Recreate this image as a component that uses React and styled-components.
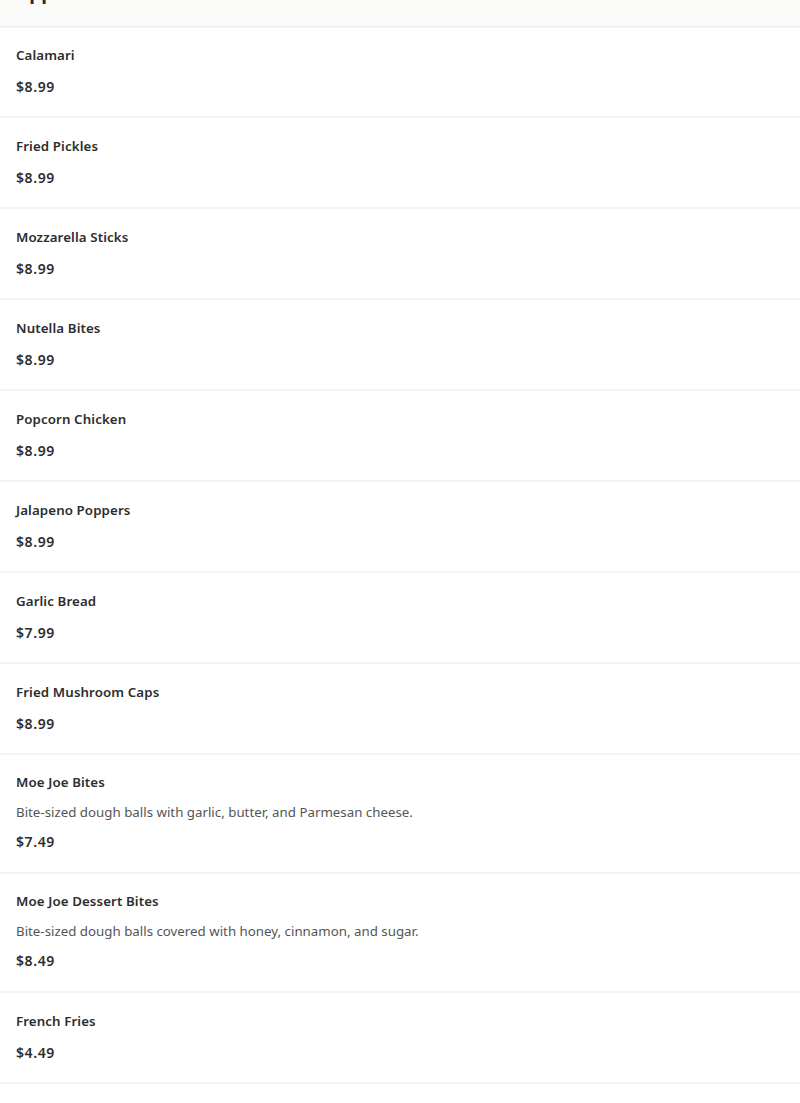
import React from 'react';
import styled, { createGlobalStyle } from 'styled-components';

const GlobalStyle = createGlobalStyle`
  body {
    margin: 0;
    background: #fff;
    font-family: "Noto Sans", "Open Sans", sans-serif;
    color: #2d2d2d;
  }
`;

const Menu = styled.section`
  display: flex;
  flex-direction: column;
  overflow: hidden;
`;

const Header = styled.header`
  margin-top: -22px;
  padding: 0 16px 20px;
  background: #fafaf9;
  border-bottom: 1px solid #ececec;
  box-shadow: 0 1px 0 #f7f7f7;
`;

const HeaderTitle = styled.h2`
  margin: 0;
  font-size: 19px;
  line-height: 28px;
  font-weight: 700;
  color: #2a2a2a;
`;

const Item = styled.div`
  display: flex;
  flex-direction: column;
  padding: ${(p) => (p.$hasDesc ? '17px 16px 20px' : '18px 16px 19px')};
  border-bottom: 2px solid #f4f4f4;
`;

const Name = styled.h3`
  margin: 0 0 ${(p) => (p.$hasDesc ? '10px' : '12px')};
  font-size: 13.3px;
  line-height: 20px;
  font-weight: 600;
  letter-spacing: 0.1px;
  color: #2d2d2d;
`;

const Description = styled.p`
  margin: 0 0 10px;
  font-size: 13.3px;
  line-height: 20px;
  color: #555;
`;

const Price = styled.span`
  font-size: 14px;
  line-height: 20px;
  font-weight: 600;
  letter-spacing: 0.6px;
  color: #2d2d2d;
`;

const items = [
  { name: 'Calamari', price: '$8.99' },
  { name: 'Fried Pickles', price: '$8.99' },
  { name: 'Mozzarella Sticks', price: '$8.99' },
  { name: 'Nutella Bites', price: '$8.99' },
  { name: 'Popcorn Chicken', price: '$8.99' },
  { name: 'Jalapeno Poppers', price: '$8.99' },
  { name: 'Garlic Bread', price: '$7.99' },
  { name: 'Fried Mushroom Caps', price: '$8.99' },
  {
    name: 'Moe Joe Bites',
    desc: 'Bite-sized dough balls with garlic, butter, and Parmesan cheese.',
    price: '$7.49',
  },
  {
    name: 'Moe Joe Dessert Bites',
    desc: 'Bite-sized dough balls covered with honey, cinnamon, and sugar.',
    price: '$8.49',
  },
  { name: 'French Fries', price: '$4.49' },
  { name: 'Onion Rings', price: '$4.99' },
];

const App = () => (
  <>
    <GlobalStyle />
    <Menu>
      <Header>
        <HeaderTitle>Appetizers</HeaderTitle>
      </Header>
      {items.map((item) => (
        <Item key={item.name} $hasDesc={!!item.desc}>
          <Name $hasDesc={!!item.desc}>{item.name}</Name>
          {item.desc && <Description>{item.desc}</Description>}
          <Price>{item.price}</Price>
        </Item>
      ))}
    </Menu>
  </>
);

export default App;
